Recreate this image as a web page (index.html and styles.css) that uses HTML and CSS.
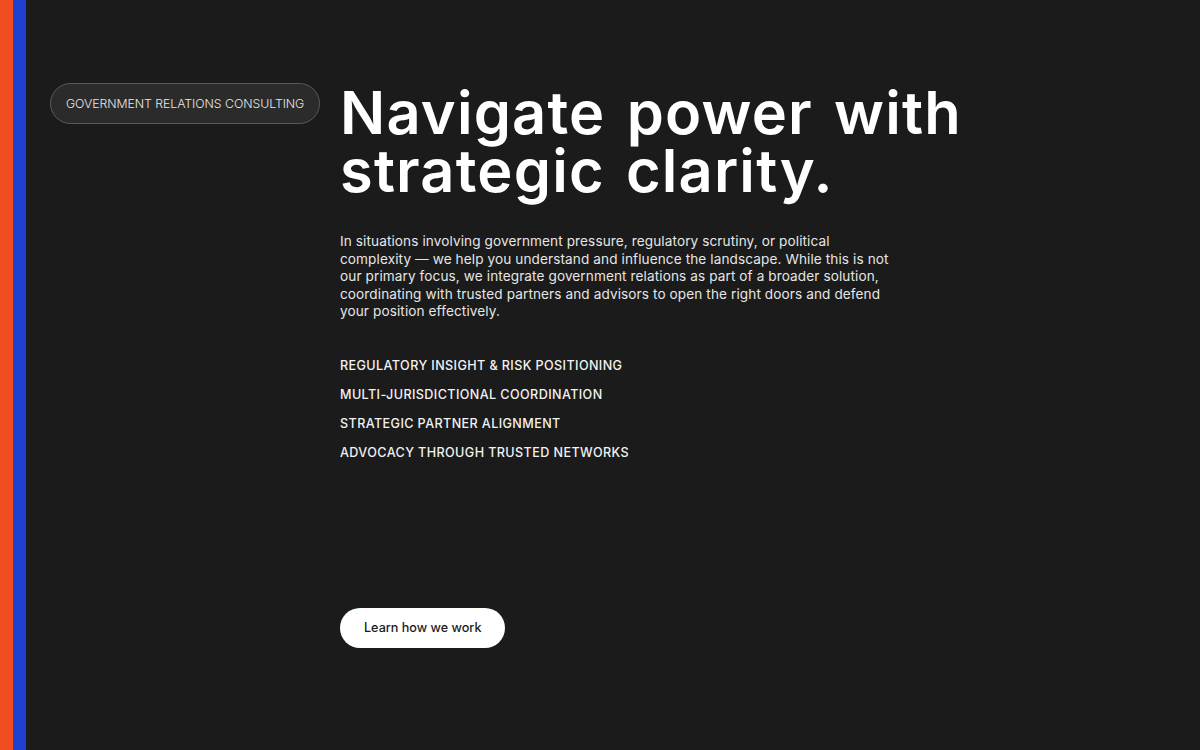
FILE: index.html
```html
<!DOCTYPE html>
<html lang="en">
<head>
<meta charset="utf-8">
<title>Government Relations Consulting</title>
<link rel="stylesheet" href="styles.css">
</head>
<body>
<div class="page">
  <div class="stripe stripe-orange"></div>
  <div class="stripe stripe-blue"></div>
  <main class="main">
    <aside class="side">
      <span class="pill">GOVERNMENT RELATIONS CONSULTING</span>
    </aside>
    <section class="content">
      <h1 class="title"><span class="line">Navigate power with</span><span class="line">strategic clarity.</span></h1>
      <p class="lead">In situations involving government pressure, regulatory scrutiny, or political complexity — we help you understand and influence the landscape. While this is not our primary focus, we integrate government relations as part of a broader solution, coordinating with trusted partners and advisors to open the right doors and defend your position effectively.</p>
      <ul class="points">
        <li>REGULATORY INSIGHT &amp; RISK POSITIONING</li>
        <li>MULTI-JURISDICTIONAL COORDINATION</li>
        <li>STRATEGIC PARTNER ALIGNMENT</li>
        <li>ADVOCACY THROUGH TRUSTED NETWORKS</li>
      </ul>
      <a class="btn" href="#">Learn how we work</a>
    </section>
  </main>
</div>
</body>
</html>
```
FILE: styles.css
```css
html, body {
  margin: 0;
  padding: 0;
  height: 100%;
  background: #1b1b1b;
}
body {
  font-family: Inter, "Liberation Sans", sans-serif;
  color: #ffffff;
}
.page {
  display: flex;
  min-height: 750px;
}
.stripe {
  width: 13px;
  flex: 0 0 13px;
}
.stripe-orange { background: #f24d1e; }
.stripe-blue { background: #1e3fd0; }
.main {
  flex: 1;
  display: flex;
  padding: 83px 0 0 24px;
}
.side {
  width: 290px;
  flex: 0 0 290px;
}
.pill {
  display: inline-flex;
  align-items: center;
  height: 39px;
  padding: 0 15px;
  border: 1px solid #5a5a5a;
  border-radius: 21px;
  background: #2b2b2b;
  font-size: 12.3px;
  font-weight: 300;
  letter-spacing: -0.05px;
  color: #e8e8e8;
}
.content {
  display: flex;
  flex-direction: column;
  align-items: flex-start;
}
.title {
  margin: 0;
  font-size: 59.5px;
  line-height: 58px;
  font-weight: 600;
  letter-spacing: 1.2px;
  word-spacing: 5px;
  color: #ffffff;
}
.title .line {
  display: block;
}
.lead {
  margin: 34px 0 0;
  width: 554px;
  font-size: 13.6px;
  line-height: 17.6px;
  font-weight: 400;
  letter-spacing: 0.1px;
  color: #e6e6e6;
}
.points {
  list-style: none;
  margin: 36px 0 0;
  padding: 0;
  display: flex;
  flex-direction: column;
  gap: 12px;
}
.points li {
  font-size: 12.6px;
  line-height: 17px;
  font-weight: 500;
  letter-spacing: 0.4px;
  color: #f2f2f2;
}
.btn {
  margin-top: 147px;
  display: inline-flex;
  align-items: center;
  height: 40px;
  padding: 0 24px;
  border-radius: 20px;
  background: #ffffff;
  color: #1b1b1b;
  font-size: 12.6px;
  font-weight: 500;
  text-decoration: none;
}
```
